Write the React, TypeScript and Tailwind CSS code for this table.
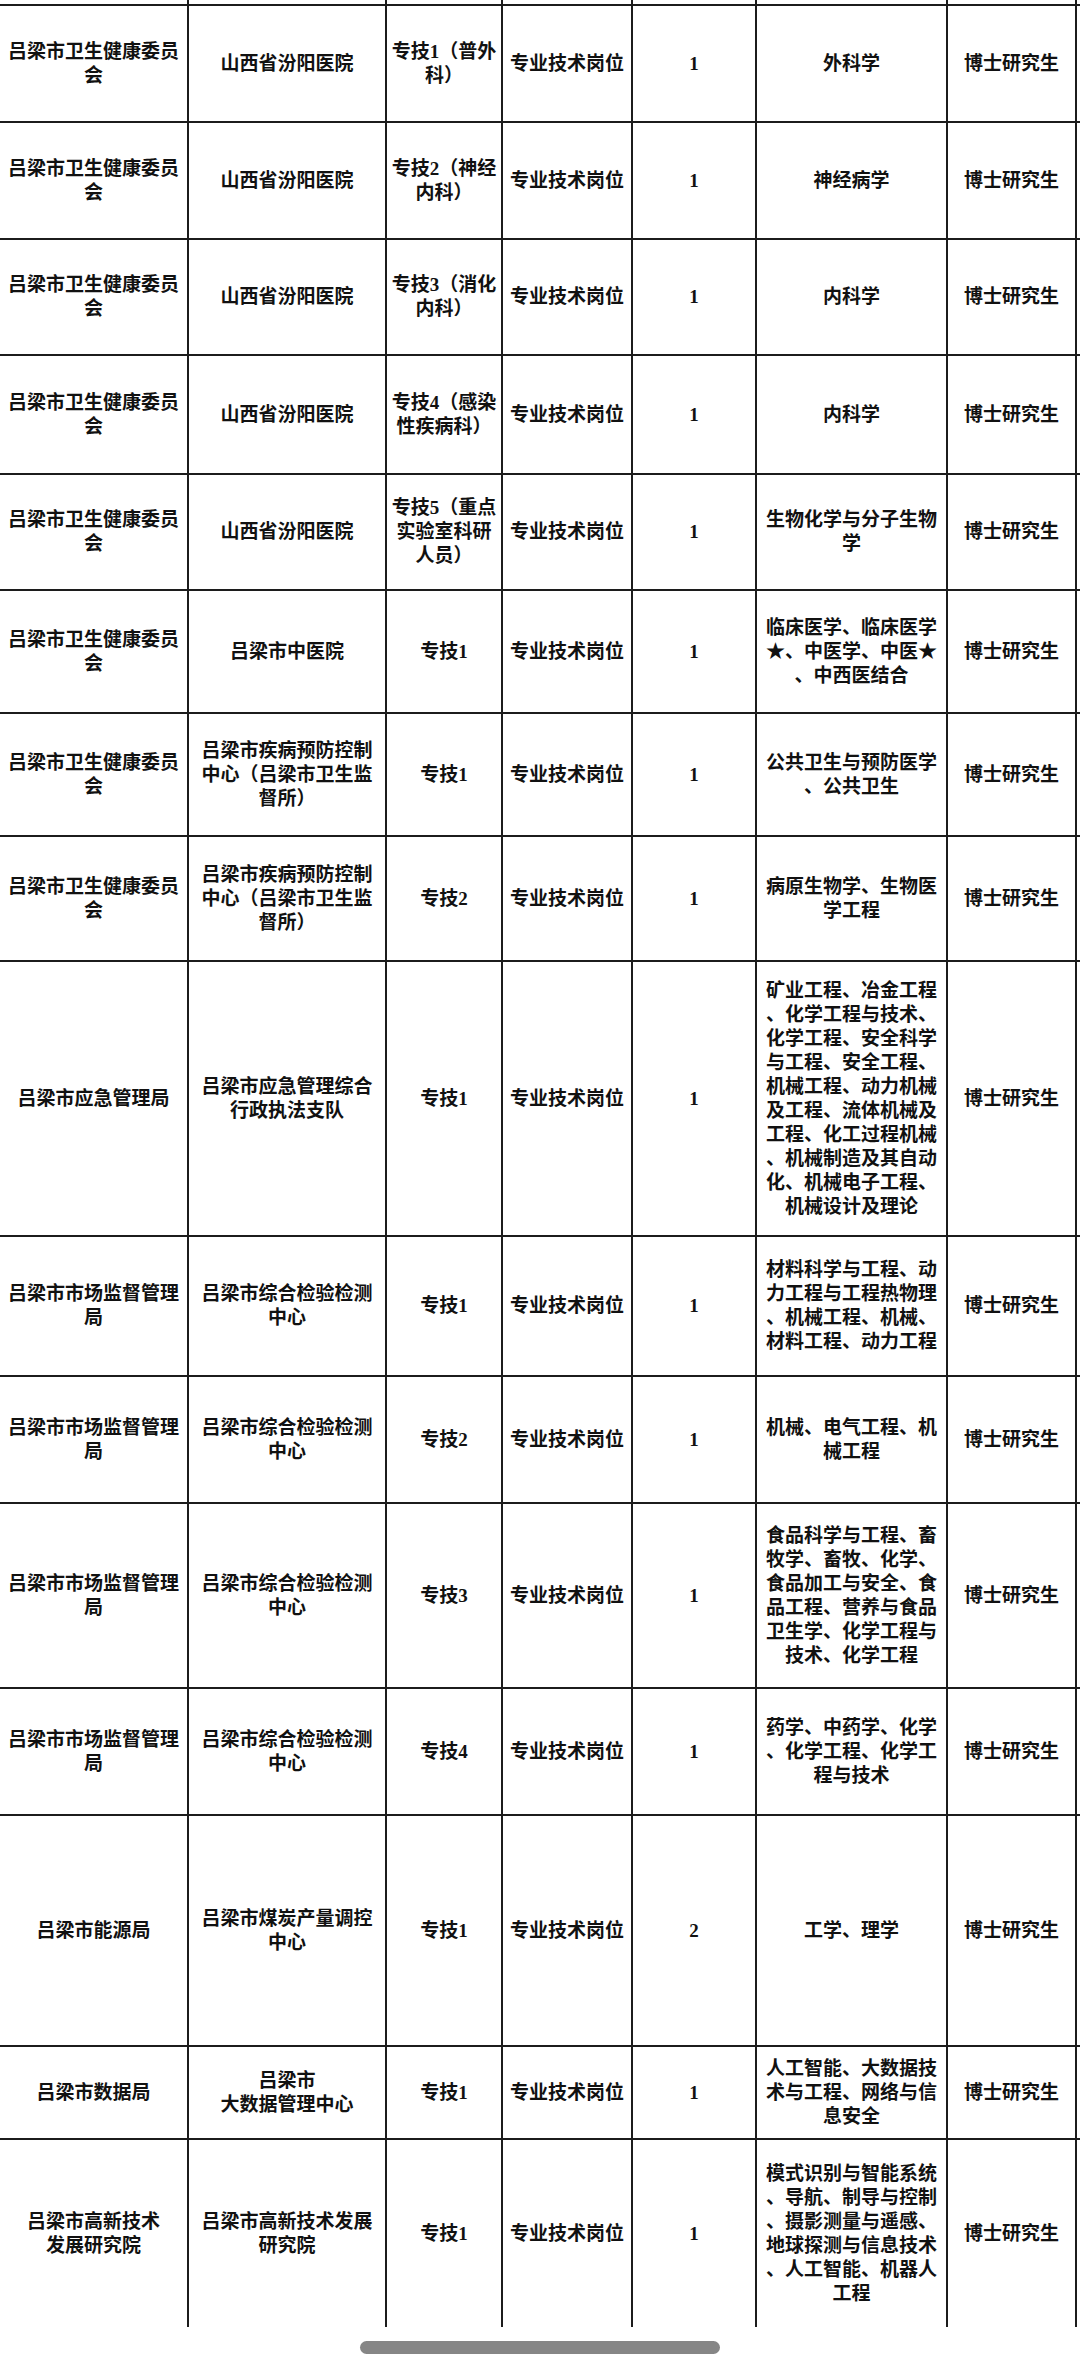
import React from "react";

type Row = {
  h: number;
  c: string[][];
};

const W1 = "吕梁市卫生健康委员|会";
const SX = "山西省汾阳医院";
const GW = "专业技术岗位";
const BS = "博士研究生";
const SC = "吕梁市市场监督管理|局";
const ZH = "吕梁市综合检验检测|中心";
const JK = "吕梁市疾病预防控制|中心（吕梁市卫生监|督所）";

const raw: { h: number; c: string[] }[] = [
  { h: 117, c: [W1, SX, "专技1（普外|科）", GW, "1", "外科学", BS] },
  { h: 117, c: [W1, SX, "专技2（神经|内科）", GW, "1", "神经病学", BS] },
  { h: 116, c: [W1, SX, "专技3（消化|内科）", GW, "1", "内科学", BS] },
  { h: 119, c: [W1, SX, "专技4（感染|性疾病科）", GW, "1", "内科学", BS] },
  { h: 116, c: [W1, SX, "专技5（重点|实验室科研|人员）", GW, "1", "生物化学与分子生物|学", BS] },
  { h: 123, c: [W1, "吕梁市中医院", "专技1", GW, "1", "临床医学、临床医学|★、中医学、中医★|、中西医结合", BS] },
  { h: 123, c: [W1, JK, "专技1", GW, "1", "公共卫生与预防医学|、公共卫生", BS] },
  { h: 125, c: [W1, JK, "专技2", GW, "1", "病原生物学、生物医|学工程", BS] },
  {
    h: 275,
    c: [
      "吕梁市应急管理局",
      "吕梁市应急管理综合|行政执法支队",
      "专技1",
      GW,
      "1",
      "矿业工程、冶金工程|、化学工程与技术、|化学工程、安全科学|与工程、安全工程、|机械工程、动力机械|及工程、流体机械及|工程、化工过程机械|、机械制造及其自动|化、机械电子工程、|机械设计及理论",
      BS,
    ],
  },
  { h: 140, c: [SC, ZH, "专技1", GW, "1", "材料科学与工程、动|力工程与工程热物理|、机械工程、机械、|材料工程、动力工程", BS] },
  { h: 127, c: [SC, ZH, "专技2", GW, "1", "机械、电气工程、机|械工程", BS] },
  {
    h: 185,
    c: [SC, ZH, "专技3", GW, "1", "食品科学与工程、畜|牧学、畜牧、化学、|食品加工与安全、食|品工程、营养与食品|卫生学、化学工程与|技术、化学工程", BS],
  },
  { h: 127, c: [SC, ZH, "专技4", GW, "1", "药学、中药学、化学|、化学工程、化学工|程与技术", BS] },
  { h: 231, c: ["吕梁市能源局", "吕梁市煤炭产量调控|中心", "专技1", GW, "2", "工学、理学", BS] },
  { h: 93, c: ["吕梁市数据局", "吕梁市|大数据管理中心", "专技1", GW, "1", "人工智能、大数据技|术与工程、网络与信|息安全", BS] },
  {
    h: 187,
    c: [
      "吕梁市高新技术|发展研究院",
      "吕梁市高新技术发展|研究院",
      "专技1",
      GW,
      "1",
      "模式识别与智能系统|、导航、制导与控制|、摄影测量与遥感、|地球探测与信息技术|、人工智能、机器人|工程",
      BS,
    ],
  },
];

const rows: Row[] = raw.map((r) => ({ h: r.h, c: r.c.map((s) => s.split("|")) }));

const font = {
  fontFamily: '"Liberation Serif", "Noto Sans CJK SC", serif',
};

function Cells({ lines }: { lines?: string[][] }) {
  const cells = lines ?? [[], [], [], [], [], [], []];
  return (
    <>
      {cells.map((ls, i) => (
        <div
          key={i}
          className="flex flex-col items-center justify-center border-r-2 border-[#1c1c1c] text-center"
        >
          {ls.map((l, j) => (
            <div key={j} className="whitespace-nowrap">
              {l}
            </div>
          ))}
        </div>
      ))}
      <div />
    </>
  );
}

export default function App() {
  return (
    <div className="relative h-[2374px] w-[1080px] overflow-hidden bg-white text-[#111]" style={font}>
      <div className="flex flex-col text-[19px] leading-[24px] font-bold">
        <div className="grid h-[6px] grid-cols-[189px_198px_116px_130px_124px_191px_129px_1fr] border-b-2 border-[#1c1c1c]">
          <Cells />
        </div>
        {rows.map((r, i) => (
          <div
            key={i}
            className={
              "grid grid-cols-[189px_198px_116px_130px_124px_191px_129px_1fr] " +
              (i === rows.length - 1 ? "" : "border-b-2 border-[#1c1c1c]")
            }
            style={{ height: i === rows.length - 1 ? r.h : r.h }}
          >
            <Cells lines={r.c} />
          </div>
        ))}
      </div>
      <div className="mt-[14px] flex justify-center">
        <div className="ml-[0px] h-[13px] w-[360px] rounded-full bg-[#868686]" />
      </div>
    </div>
  );
}
